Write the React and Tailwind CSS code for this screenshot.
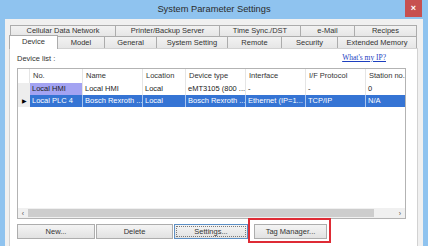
import React from 'react';

const row1Tabs = [
  { label: 'Cellular Data Network', w: 'w-[105px]' },
  { label: 'Printer/Backup Server', w: 'w-[104px]' },
  { label: 'Time Sync./DST', w: 'w-[81px]' },
  { label: 'e-Mail', w: 'w-[54px]' },
  { label: 'Recipes', w: 'w-[63px]' },
];

const row2Tabs = [
  { label: 'Model', w: 'w-[47px]' },
  { label: 'General', w: 'w-[52px]' },
  { label: 'System Setting', w: 'w-[71px]' },
  { label: 'Remote', w: 'w-[54px]' },
  { label: 'Security', w: 'w-[56px]' },
  { label: 'Extended Memory', w: 'w-[79px]' },
];

const cols = [
  { label: 'No.', w: 'w-[53px]' },
  { label: 'Name', w: 'w-[60px]' },
  { label: 'Location', w: 'w-[43px]' },
  { label: 'Device type', w: 'w-[60px]' },
  { label: 'Interface', w: 'w-[60px]' },
  { label: 'I/F Protocol', w: 'w-[60px]' },
  { label: 'Station no.', w: 'w-[60px]' },
];

const rows = [
  ['Local HMI', 'Local HMI', 'Local', 'eMT3105 (800 ...', '-', '-', '0'],
  ['Local PLC 4', 'Bosch Rexroth ...', 'Local', 'Bosch Rexroth ...', 'Ethernet (IP=1...', 'TCP/IP', 'N/A'],
];

export default function App() {
  return (
    <div className="w-[428px] h-[246px] overflow-hidden bg-[#8fc3ef] flex flex-col font-['Liberation_Sans',Arial,sans-serif] text-[7.5px] text-[#333] leading-none">
      {/* title bar */}
      <div className="relative h-[19px] shrink-0 flex items-center justify-center">
        <span className="text-[9.3px] text-[#2b2b2b]">System Parameter Settings</span>
        <div className="absolute right-[6px] top-0 w-[17px] h-[17px] bg-[#c75050] flex items-center justify-center text-white text-[9px] font-bold">
          ×
        </div>
      </div>

      <div className="flex-1 mx-[5px] bg-[#f0f0f0] pl-[4px] pr-[5px] pt-[6px] flex flex-col overflow-hidden">
        {/* tabs row 1 */}
        <div className="flex h-[11px] shrink-0 ml-[1px]">
          {row1Tabs.map((t, i) => (
            <div
              key={t.label}
              className={`${t.w} h-full border-t border-l border-[#acacac] bg-gradient-to-b from-[#f2f2f2] to-[#e6e6e6] flex items-center justify-center ${i === row1Tabs.length - 1 ? 'border-r' : ''}`}
            >
              {t.label}
            </div>
          ))}
        </div>
        {/* tabs row 2 */}
        <div className="flex h-[12px] shrink-0 items-end">
          <div className="relative z-10 w-[49px] h-[14px] -mb-px bg-white border-t border-l border-r border-[#acacac] flex items-center justify-center pb-[1px]">
            Device
          </div>
          {row2Tabs.map((t) => (
            <div
              key={t.label}
              className={`${t.w} h-[12px] border-t border-r border-[#acacac] bg-gradient-to-b from-[#f2f2f2] to-[#e6e6e6] flex items-center justify-center`}
            >
              {t.label}
            </div>
          ))}
        </div>

        {/* panel */}
        <div className="h-[210px] shrink-0 bg-white border border-[#d2d2d2] pl-[7px] flex flex-col">
          <div className="h-[19px] w-[389px] flex items-center justify-between">
            <span>Device list :</span>
            <span className="mr-[20px] -mt-[2px] font-['Liberation_Serif',serif] text-[7.5px] text-[#1d3fbf] underline">
              What's my IP?
            </span>
          </div>

          {/* list view */}
          <div className="w-[389px] h-[151px] border border-[#b3b3b3] flex flex-col overflow-hidden">
            <div className="flex h-[14px] shrink-0">
              <div className="w-[12px] shrink-0 border-r border-[#e5e5e5]" />
              {cols.map((c) => (
                <div key={c.label} className={`${c.w} shrink-0 border-r border-[#e5e5e5] pl-[3px] flex items-center`}>
                  {c.label}
                </div>
              ))}
            </div>
            {rows.map((r, ri) => {
              const sel = ri === 1;
              return (
                <div key={ri} className="flex h-[12px] shrink-0">
                  <div className="w-[12px] shrink-0 bg-[#ededed] flex items-center justify-center">
                    {sel && <span className="text-[6px] text-black">▶</span>}
                  </div>
                  {r.map((v, ci) => (
                    <div
                      key={ci}
                      className={`${cols[ci].w} shrink-0 pl-[2px] flex items-center whitespace-nowrap overflow-hidden border-r ${
                        sel
                          ? 'bg-[#3574d4] text-white border-[#a9c4ee]'
                          : ci === 0
                          ? 'bg-[#a3a3f2] text-[#222] border-[#e5e5e5]'
                          : 'text-[#222] border-[#e5e5e5]'
                      }`}
                    >
                      {v}
                    </div>
                  ))}
                </div>
              );
            })}
            <div className="flex-1" />
            {/* horizontal scrollbar */}
            <div className="h-[10px] shrink-0 bg-[#f0f0f0] flex items-center">
              <div className="w-[10px] flex items-center justify-center text-[7px] text-[#555]">‹</div>
              <div className="w-[346px] h-[8px] bg-[#cdcdcd]" />
              <div className="flex-1 flex items-center justify-end pr-[4px] text-[7px] text-[#555]">›</div>
            </div>
          </div>

          {/* buttons */}
          <div className="flex mt-[5px]">
            <button className="w-[78px] h-[15px] border border-[#adadad] bg-gradient-to-b from-[#f4f4f4] to-[#e2e2e2] text-[7.5px] text-[#333]">
              New...
            </button>
            <button className="ml-[1px] w-[77px] h-[15px] border border-[#adadad] bg-gradient-to-b from-[#f4f4f4] to-[#e2e2e2] text-[7.5px] text-[#333]">
              Delete
            </button>
            <button className="ml-[1px] w-[74px] h-[15px] border border-[#5d8fc4] bg-gradient-to-b from-[#f4f4f4] to-[#e2e2e2] p-[1px] text-[7.5px] text-[#333]">
              <span className="w-full h-full border border-dotted border-[#7a7a7a] flex items-center justify-center">Settings...</span>
            </button>
            <div className="relative ml-[6px]">
              <button className="w-[73px] h-[15px] border border-[#adadad] bg-gradient-to-b from-[#f4f4f4] to-[#e2e2e2] text-[7.5px] text-[#333]">
                Tag Manager...
              </button>
              <div className="absolute -left-[6px] -top-[6px] w-[83px] h-[25px] border-2 border-[#de2b35]" />
            </div>
          </div>
        </div>
      </div>
    </div>
  );
}
